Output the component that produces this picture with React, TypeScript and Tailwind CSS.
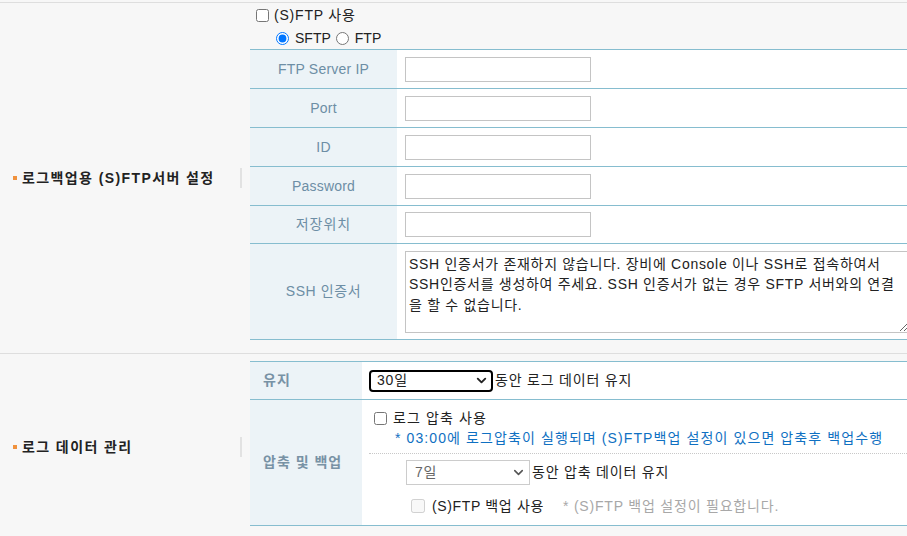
import { ChevronDown } from 'lucide-react';

const serverRows = [
  { label: 'FTP Server IP', h: 'h-[39px]', type: 'text', latin: true },
  { label: 'Port', h: 'h-[39px]', type: 'text', latin: true },
  { label: 'ID', h: 'h-[39px]', type: 'text', latin: true },
  { label: 'Password', h: 'h-[39px]', type: 'password', latin: true },
  { label: '저장위치', h: 'h-[38px]', type: 'text', latin: false },
];

const sshText =
  'SSH 인증서가 존재하지 않습니다. 장비에 Console 이나 SSH로 접속하여서\nSSH인증서를 생성하여 주세요. SSH 인증서가 없는 경우 SFTP 서버와의 연결\n을 할 수 없습니다.';

function SectionTitle({ title }: { title: string }) {
  return (
    <div className="w-[250px] shrink-0 flex items-center pl-[13px] pr-[8px]">
      <span className="w-[4px] h-[4px] bg-[#f0923e] mr-[5px]" />
      <span className="font-bold text-[14px] text-[#222] tracking-[1.4px]">{title}</span>
      <span className="ml-auto w-[2px] h-[20px] bg-[#e2e2e2]" />
    </div>
  );
}

export default function App() {
  return (
    <div className="w-[907px] h-[536px] overflow-hidden bg-[#f7f7f7] text-[14px] text-[#222] tracking-[0.8px] font-['Liberation_Sans','Noto_Sans_CJK_KR',sans-serif]">
      <div className="mt-[2px] border-t border-[#dedede] flex">
        <SectionTitle title="로그백업용 (S)FTP서버 설정" />

        <div className="flex-1 flex flex-col pb-[13px]">
          <label className="h-[25px] flex items-center pl-[6px] gap-[5px]">
            <input type="checkbox" className="w-[13px] h-[13px]" />
            <span>(S)FTP 사용</span>
          </label>
          <div className="h-[21px] flex items-center pl-[26px] tracking-normal">
            <label className="flex items-center gap-[6px]">
              <input type="radio" name="proto" defaultChecked className="w-[13px] h-[13px]" />
              <span>SFTP</span>
            </label>
            <label className="flex items-center gap-[6px] ml-[5px]">
              <input type="radio" name="proto" className="w-[13px] h-[13px]" />
              <span>FTP</span>
            </label>
          </div>

          <div className="flex flex-col">
            {serverRows.map((row) => (
              <div key={row.label} className={`flex ${row.h} border-t border-[#86bdcf]`}>
                <div
                  className={`w-[147px] bg-[#ecf3f7] flex items-center justify-center text-[#6d8ea5] ${
                    row.latin ? 'tracking-[0.2px]' : 'tracking-[1px]'
                  }`}
                >
                  {row.label}
                </div>
                <div className="flex-1 bg-white flex items-center pl-[8px]">
                  <input
                    type={row.type}
                    className="w-[186px] h-[25px] border border-[#c4c4c4] bg-white outline-none"
                  />
                </div>
              </div>
            ))}
            <div className="flex h-[97px] border-y border-[#86bdcf]">
              <div className="w-[147px] bg-[#ecf3f7] flex items-center justify-center text-[#6d8ea5] tracking-[0.6px]">
                SSH 인증서
              </div>
              <div className="flex-1 bg-white flex items-center pl-[8px]">
                <textarea
                  wrap="off"
                  readOnly
                  defaultValue={sshText}
                  className="w-[504px] h-[82px] shrink-0 border border-[#c4c4c4] bg-white px-[3px] pt-[2px] pb-[4px] leading-[20.5px] tracking-[0.7px] text-[#222] overflow-hidden outline-none resize"
                />
              </div>
            </div>
          </div>
        </div>
      </div>

      <div className="border-t border-[#dedede] flex">
        <SectionTitle title="로그 데이터 관리" />

        <div className="flex-1 flex flex-col pt-[7px] pb-[14px]">
          <div className="flex h-[38px] border-t border-[#86bdcf]">
            <div className="w-[112px] bg-[#ecf3f7] flex items-center pl-[13px] font-bold text-[#7892a5] tracking-[1.2px]">
              유지
            </div>
            <div className="flex-1 bg-white flex items-center pl-[7px]">
              <div className="w-[124px] h-[22px] border-2 border-black rounded-[4px] flex items-center justify-between pl-[6px] pr-[2px]">
                <span>30일</span>
                <ChevronDown size={15} strokeWidth={3} className="text-[#222]" />
              </div>
              <span className="ml-[2px]">동안 로그 데이터 유지</span>
            </div>
          </div>

          <div className="flex h-[127px] border-y border-[#86bdcf]">
            <div className="w-[112px] bg-[#ecf3f7] flex items-center pl-[13px] font-bold text-[#7892a5] tracking-[1px]">
              압축 및 백업
            </div>
            <div className="flex-1 bg-white pl-[7px] flex flex-col">
              <div className="pt-[8px] pb-[5px] pl-[5px] border-b border-dotted border-[#c8c8c8]">
                <label className="h-[20px] flex items-center gap-[6px] tracking-[1.1px]">
                  <input type="checkbox" className="w-[13px] h-[13px]" />
                  <span>로그 압축 사용</span>
                </label>
                <div className="h-[20px] flex items-center pl-[21px] text-[#0f70c2] tracking-[1.1px]">
                  * 03:00에 로그압축이 실행되며 (S)FTP백업 설정이 있으면 압축후 백업수행
                </div>
              </div>
              <div className="pt-[6px] pl-[37px] flex flex-col">
                <div className="flex items-center">
                  <div className="w-[124px] h-[25px] border border-[#cccccc] bg-white flex items-center justify-between pl-[8px] pr-[3px] text-[#666]">
                    <span>7일</span>
                    <ChevronDown size={15} strokeWidth={2.5} className="text-[#555]" />
                  </div>
                  <span className="ml-[2px]">동안 압축 데이터 유지</span>
                </div>
                <div className="mt-[11px] h-[20px] flex items-center pl-[5px]">
                  <input type="checkbox" disabled className="w-[14px] h-[14px]" />
                  <span className="ml-[7px] tracking-[0.65px]">(S)FTP 백업 사용</span>
                  <span className="ml-[19px] text-[#a8a8a8]">* (S)FTP 백업 설정이 필요합니다.</span>
                </div>
              </div>
            </div>
          </div>
        </div>
      </div>
    </div>
  );
}
